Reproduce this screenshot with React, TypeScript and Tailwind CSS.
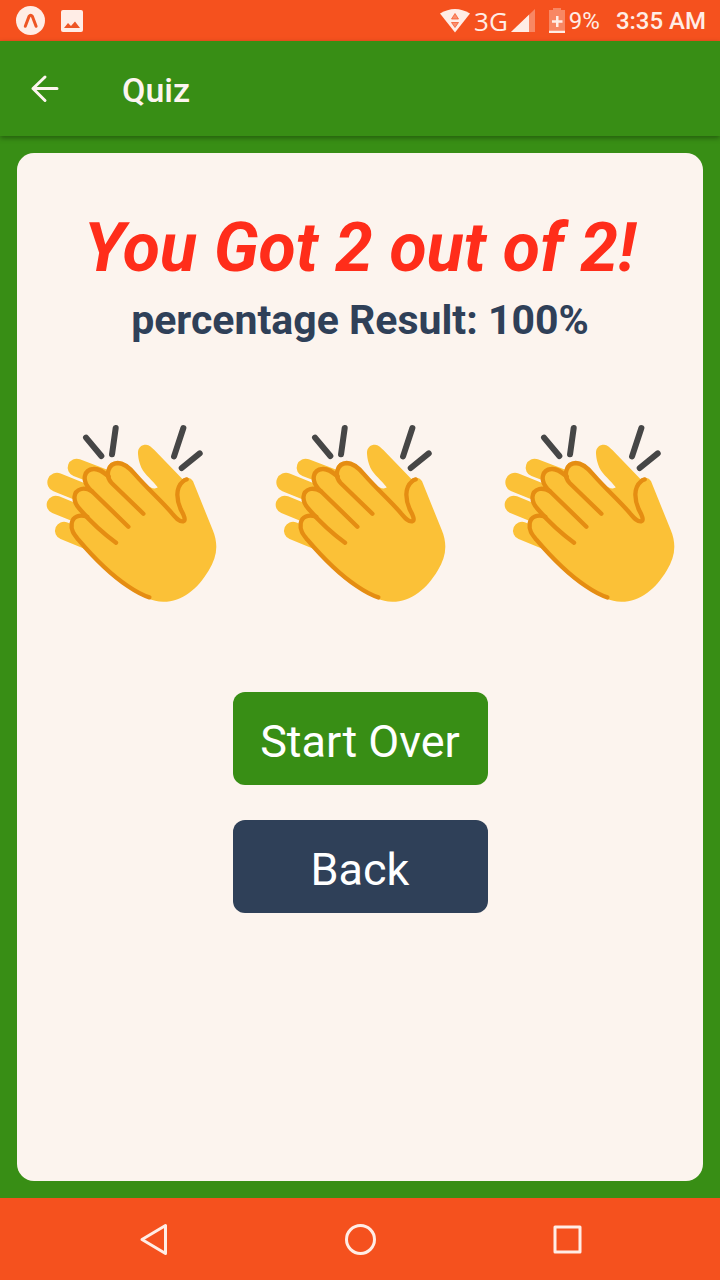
import React from "react";

function Clap() {
  return (
    <svg viewBox="3 0 600 600" className="w-7/8" role="img" aria-label="Clapping hands">
      <g fill="none" stroke="#fbc137" strokeLinecap="round">
        <path d="M140 158L240 196" strokeWidth="54" />
        <path d="M81 202L200 250" strokeWidth="58" />
        <path d="M77 269L190 315" strokeWidth="54" />
        <path d="M102 347L175 377" strokeWidth="54" />
      </g>
      <path
        fill="#fbc137"
        d="M324 118C322 98 334 89 348 89C358 90 365 97 373 105L457 192C468 186 482 187 489 199L548 345C566 389 561 426 536 466C503 521 457 560 400 560C382 560 368 555 354 550C290 522 229 470 180 410L137 360C119 336 120 303 155 297C132 280 121 251 137 229C145 219 157 216 169 219C155 196 159 165 188 158C206 154 220 164 234 176C226 156 240 140 262 139C285 140 302 157 317 174L345 206C361 221 377 223 383 217C369 196 345 181 334 158C328 145 325 132 324 118Z"
      />
      <g fill="none" stroke="#e58d12" strokeWidth="13" strokeLinecap="round" strokeLinejoin="round">
        <path d="M340 296L244 203C224 180 235 145 263 144C284 144 300 160 315 178C355 224 397 260 426 295C439 310 447 320 459 319C469 316 461 299 452 283C439 254 436 218 459 199C463 195 466 194 470 193" />
        <path d="M295 335L178 221C154 194 163 164 190 162C209 160 222 173 236 185" />
        <path d="M258 383C213 350 180 318 149 282C127 258 128 229 154 222C165 219 174 222 186 229" />
        <path d="M172 305C148 297 128 304 125 325C122 346 132 358 145 374C190 427 242 479 293 513C315 528 335 540 358 547" />
      </g>
      <g fill="none" stroke="#464646" strokeWidth="18" strokeLinecap="round">
        <path d="M168 68L214 123M257 39L246 118M460 39L432 124M509 115L455 159" />
      </g>
    </svg>
  );
}

function StatusBar() {
  return (
    <div className="flex h-[41px] items-center bg-[#f5511e] pr-[14px] pl-4 text-[#ffede6]">
      <svg viewBox="0 0 30 30" className="size-[30px]" aria-hidden="true">
        <circle cx="14.500" cy="14.500" r="14.5" fill="currentColor" />
        <path d="M9.300 20.300L13 10.500Q14.700 8.200 16.400 10.500L20.100 20.300" fill="none" stroke="#ee5524" strokeWidth="3" strokeLinecap="round" />
      </svg>
      <svg viewBox="0 0 22 22" className="ml-[15px] size-[22px]" aria-hidden="true">
        <rect width="22" height="22" rx="2" fill="currentColor" />
        <path d="M3 18L7 13L10 16L14 11.5L19 18Z" fill="#ee5524" />
      </svg>
      <div className="ml-auto flex items-center">
        <svg viewBox="0 0 30 24" className="h-6 w-[30px]" aria-hidden="true">
          <path d="M0 4.5Q15-4.5 30 4.5L15 23.5Z" fill="currentColor" />
          <path d="M15 4.500L18.500 10H11.500ZM11.500 13.5H18.5L15 18.5Z" fill="#f6511f" fillOpacity=".6" stroke="#f6511f" strokeOpacity=".7" />
        </svg>
        <span className="ml-1 font-['Open_Sans',sans-serif] text-[26px] leading-8">3G</span>
        <svg viewBox="0 0 24 24" className="ml-[3px] size-6" aria-hidden="true">
          <path d="M0 23L24 0V23Z" fill="currentColor" fillOpacity=".35" />
          <path d="M0 23L18 5.7V23Z" fill="currentColor" />
        </svg>
        <svg viewBox="0 0 16 25" className="ml-[14px] h-[25px] w-4" aria-hidden="true">
          <path d="M0 2H4V0H12V2H16V22H0Z" fill="currentColor" fillOpacity=".35" />
          <path d="M0 22.5H16V25H0ZM7 8H9.500V12.3H13.500V14.800H9.500V19H7V14.800H3V12.3H7Z" fill="currentColor" />
        </svg>
        <span className="ml-1 text-[24px] leading-8">9%</span>
        <span className="ml-4 text-[24px] leading-8 font-medium">3:35 AM</span>
      </div>
    </div>
  );
}

function SystemNav() {
  const button = "flex size-12 items-center justify-center";
  const icon = "size-8 fill-none stroke-[#ffede6] stroke-3";
  return (
    <nav className="flex h-[82px] items-center justify-center gap-[159px] bg-[#f5511e]" aria-label="System">
      <button className={button} aria-label="System back">
        <svg viewBox="0 0 32 32" className={icon} strokeLinejoin="round">
          <path d="M5 16.500L28.500 2.500V30.500Z" />
        </svg>
      </button>
      <button className={button} aria-label="Home">
        <svg viewBox="0 0 32 32" className={icon}>
          <circle cx="16.500" cy="16.500" r="14" />
        </svg>
      </button>
      <button className={button} aria-label="Recent apps">
        <svg viewBox="0 0 32 32" className={icon} strokeLinejoin="round">
          <rect x="4" y="4" width="25" height="25" />
        </svg>
      </button>
    </nav>
  );
}

export default function App() {
  return (
    <div className="flex min-h-screen flex-col bg-[#388e15] font-[Roboto,sans-serif]">
      <StatusBar />
      <header className="flex h-[95px] items-center bg-[#388e15] px-7 text-[#fdf5ef] shadow-[0_2px_5px_rgba(0,0,0,0.35)]">
        <button className="flex size-8 items-center justify-center" aria-label="Go back">
          <svg viewBox="0 0 32 32" className="size-8 fill-none stroke-current stroke-3" strokeLinecap="round" strokeLinejoin="round">
            <path d="M29 15.500H5M17 4L5 15.500L17 27.500" />
          </svg>
        </button>
        <h1 className="ml-[62px] pt-0.5 text-[34px] leading-10 font-medium">Quiz</h1>
      </header>
      <main className="flex grow flex-col p-[17px]">
        <section className="flex grow flex-col items-center rounded-[17px] bg-[#fcf4ee] pt-[55px]">
          <h2 className="text-center text-[68px] leading-20 font-bold text-[#ff2d1a] italic">You Got 2 out of 2!</h2>
          <p className="mt-2 text-center text-[41px] leading-12 font-bold text-[#2f4058]">percentage Result: 100%</p>
          <div className="mt-[71px] grid w-full grid-cols-3 justify-items-center">
            <Clap />
            <Clap />
            <Clap />
          </div>
          <div className="mt-[77px] flex w-[255px] flex-col gap-[35px] text-[45px] leading-[53px] text-white">
            <button className="rounded-xl bg-[#388e15] pt-[23px] pb-[17px]">Start Over</button>
            <button className="rounded-xl bg-[#2f4058] pt-[23px] pb-[17px]">Back</button>
          </div>
        </section>
      </main>
      <SystemNav />
    </div>
  );
}
